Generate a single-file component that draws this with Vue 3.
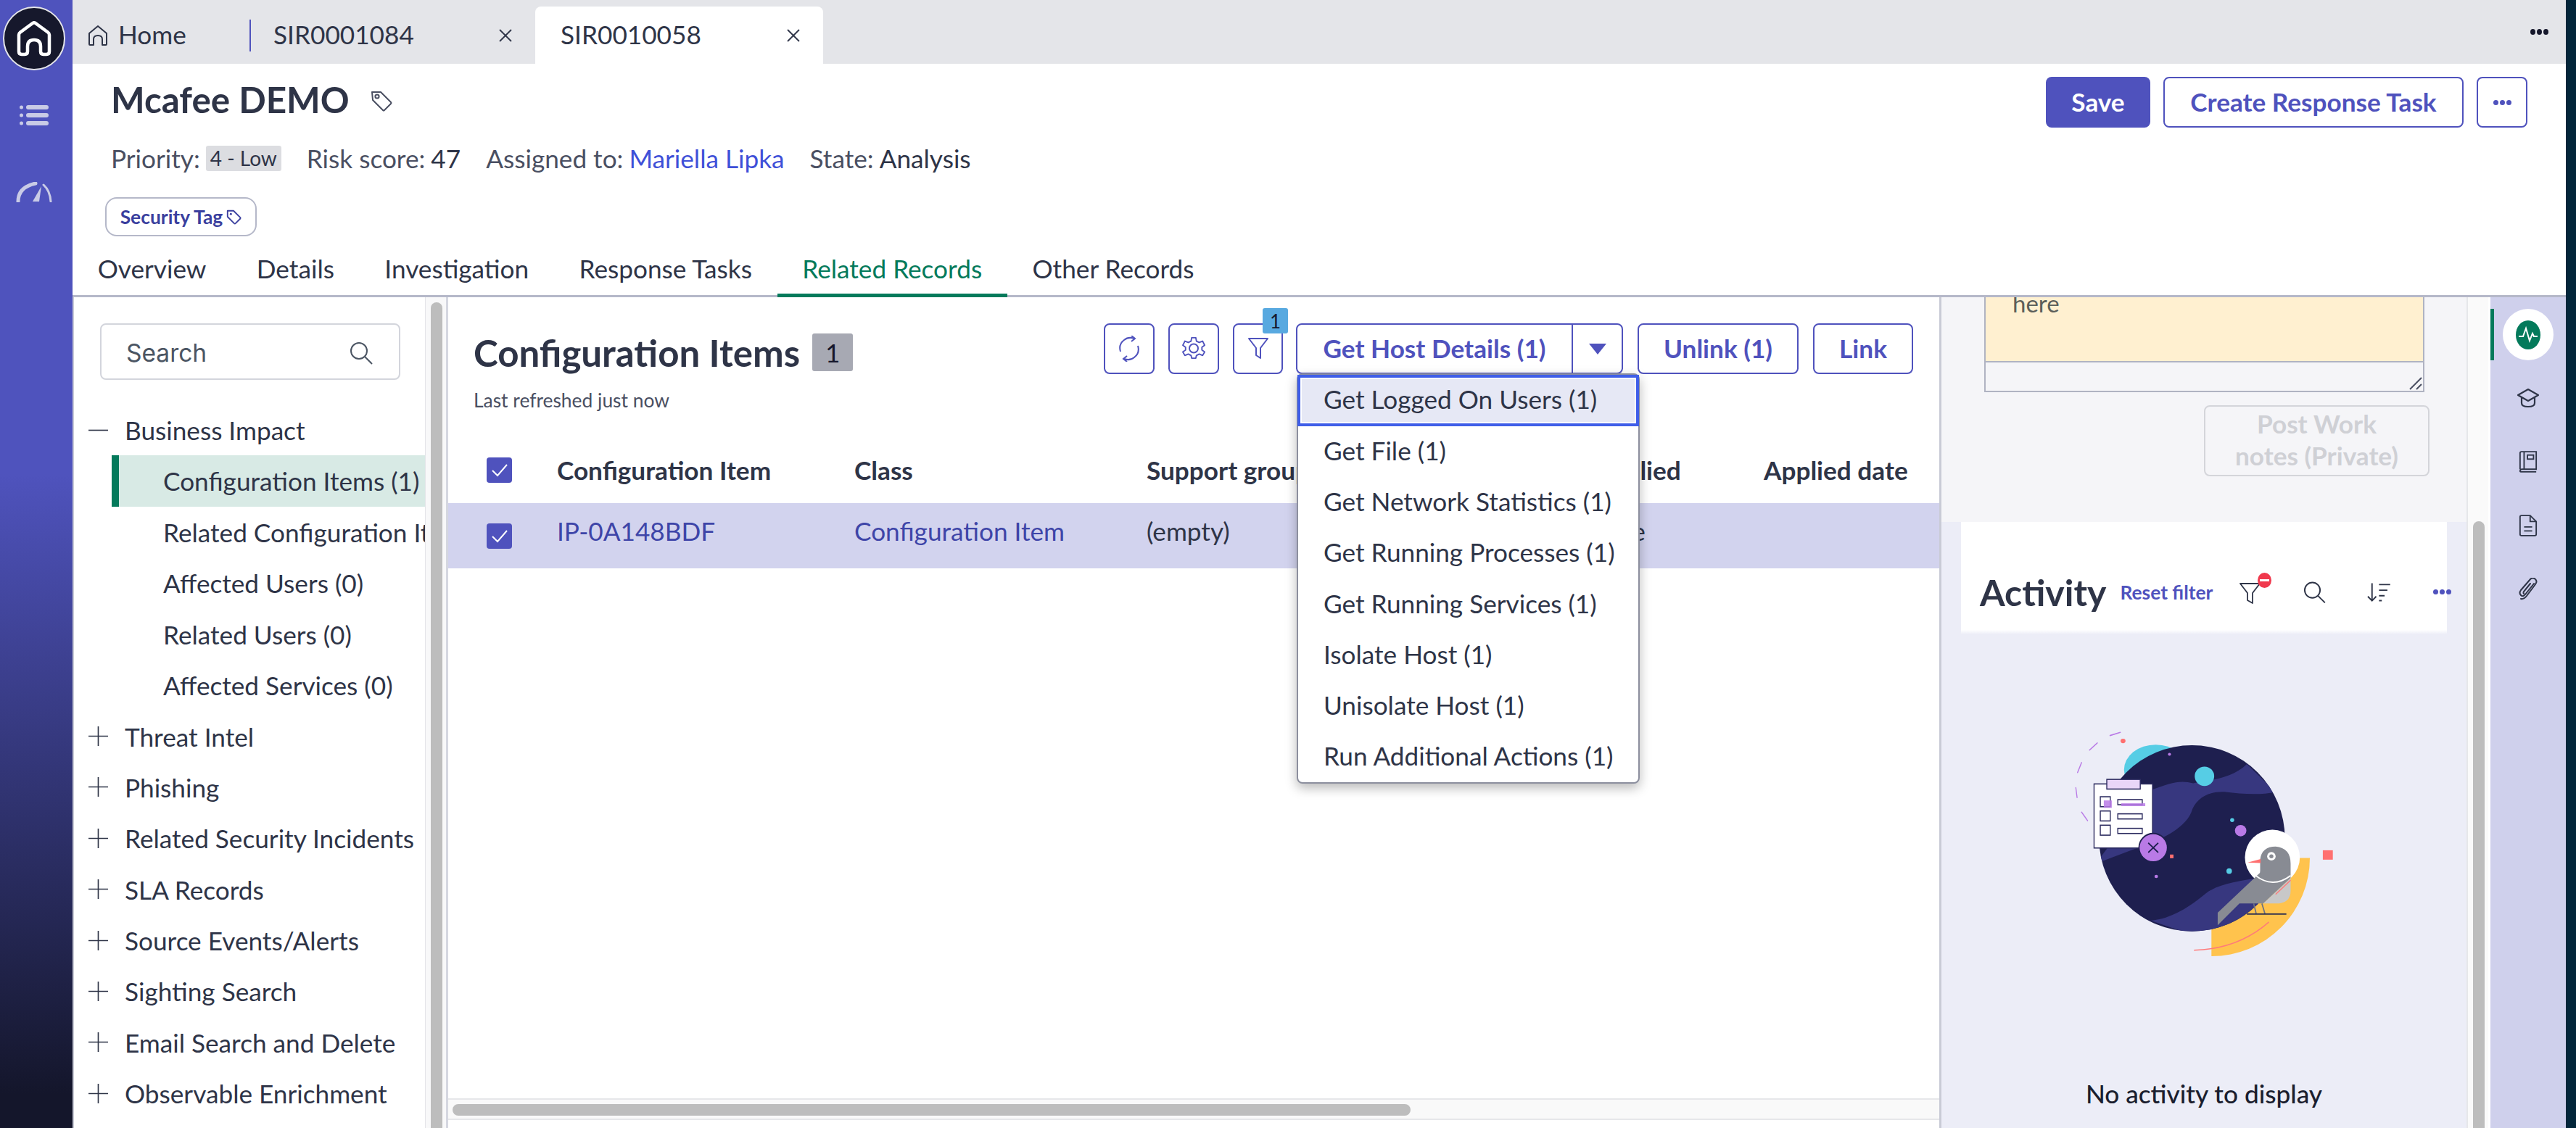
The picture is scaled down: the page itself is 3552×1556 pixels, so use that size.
<template>
  <div class="app">
    <!-- left rail -->
    <aside class="rail">
      <div class="rail-home">
        <svg viewBox="0 0 86 88" width="86" height="88">
          <ellipse cx="43" cy="44" rx="42" ry="43" fill="#16182c" stroke="#e4e5e9" stroke-width="2" />
          <path d="M22 62V39Q22 37 24 35.5L41 23Q43 21.5 45 23L62 35.5Q64 37 64 39V62Q64 66 60 66H56Q52 66 52 62V55Q52 46 43 46Q34 46 34 55V62Q34 66 30 66H26Q22 66 22 62Z" fill="none" stroke="#fff" stroke-width="4.5" stroke-linejoin="round" />
        </svg>
      </div>
      <svg class="rail-icon" viewBox="0 0 40 28" width="40" height="28">
        <g fill="#c9cbe6">
          <circle cx="2.5" cy="3" r="2.5" /><rect x="9" y="0" width="31" height="6" rx="3" />
          <circle cx="2.5" cy="14" r="2.5" /><rect x="9" y="11" width="31" height="6" rx="3" />
          <circle cx="2.5" cy="25" r="2.5" /><rect x="9" y="22" width="31" height="6" rx="3" />
        </g>
      </svg>
      <svg class="rail-gauge" viewBox="0 0 50 28" width="50" height="28">
        <path d="M3 27Q3 7 27 2" fill="none" stroke="#c9cbe6" stroke-width="5" stroke-linecap="round" />
        <path d="M38 4Q47 12 48 27" fill="none" stroke="#c9cbe6" stroke-width="3" stroke-linecap="round" />
        <path d="M23 27L35 6L32 27Z" fill="#c9cbe6" />
      </svg>
    </aside>

    <div class="shell">
      <!-- top tabs -->
      <div class="tabbar">
        <div class="tab tab-home">
          <svg viewBox="0 0 28 30" width="28" height="30">
            <path d="M2 27V12L14 2L26 12V27Q26 28 25 28H20V20Q20 15 14 15Q8 15 8 20V28H3Q2 28 2 27Z" fill="none" stroke="#2e3447" stroke-width="2" stroke-linejoin="round" />
          </svg>
          <span>Home</span>
        </div>
        <div class="tab tab-record">
          <span>SIR0001084</span>
          <svg class="tab-x" viewBox="0 0 18 18" width="18" height="18"><path d="M1 1L17 17M17 1L1 17" stroke="#2e3447" stroke-width="1.8" /></svg>
        </div>
        <div class="tab tab-record tab-active">
          <span>SIR0010058</span>
          <svg class="tab-x" viewBox="0 0 18 18" width="18" height="18"><path d="M1 1L17 17M17 1L1 17" stroke="#2e3447" stroke-width="1.8" /></svg>
        </div>
        <div class="tabbar-more"><i></i><i></i><i></i></div>
      </div>

      <!-- record header -->
      <header class="record">
        <div class="record-top">
          <div class="record-title">
            <h1>Mcafee DEMO</h1>
            <svg viewBox="0 0 32 32" width="32" height="32" class="title-tag">
              <path d="M3 4H15L29 18Q30 19 29 20L20 29Q19 30 18 29L4 15Z" fill="none" stroke="#4a4f62" stroke-width="2" stroke-linejoin="round" />
              <circle cx="10" cy="10" r="2.6" fill="none" stroke="#4a4f62" stroke-width="2" />
            </svg>
          </div>
          <div class="record-actions">
            <button class="btn btn-solid btn-save">Save</button>
            <button class="btn btn-create">Create Response Task</button>
            <button class="btn btn-more"><i></i><i></i><i></i></button>
          </div>
        </div>
        <div class="meta">
          <span class="meta-item">Priority: <b class="pill">4 - Low</b></span>
          <span class="meta-item">Risk score: <em>47</em></span>
          <span class="meta-item">Assigned to: <a>Mariella Lipka</a></span>
          <span class="meta-item">State: <em>Analysis</em></span>
        </div>
        <div class="chip">
          Security Tag
          <svg viewBox="0 0 24 24" width="22" height="22">
            <path d="M3 3H12L22 13Q23 14 22 15L15 22Q14 23 13 22L3 12Z" fill="none" stroke="#3a3f9e" stroke-width="2" stroke-linejoin="round" />
            <circle cx="8" cy="8" r="1.6" fill="#3a3f9e" />
          </svg>
        </div>
        <nav class="record-tabs">
          <span v-for="t in recordTabs" :key="t" class="record-tab" :class="{ active: t === 'Related Records' }">{{ t }}</span>
        </nav>
      </header>

      <div class="body">
        <!-- related list tree -->
        <section class="tree">
          <div class="search">
            <span>Search</span>
            <svg viewBox="0 0 32 32" width="32" height="32">
              <circle cx="13" cy="13" r="11" fill="none" stroke="#4b5563" stroke-width="2" />
              <path d="M21 21L31 31" stroke="#4b5563" stroke-width="2" />
            </svg>
          </div>
          <div class="tree-list">
            <div class="tree-group">
              <svg viewBox="0 0 28 28" width="29" height="29"><path d="M1 14H27" stroke="#2e3447" stroke-width="1.6" /></svg>
              <span>Business Impact</span>
            </div>
            <div v-for="c in impactItems" :key="c" class="tree-child" :class="{ selected: c === 'Configuration Items (1)' }">{{ c }}</div>
            <div v-for="g in groups" :key="g" class="tree-group">
              <svg viewBox="0 0 28 28" width="29" height="29"><path d="M1 14H27M14 1V27" stroke="#2e3447" stroke-width="1.6" /></svg>
              <span>{{ g }}</span>
            </div>
          </div>
        </section>
        <div class="tree-scroll"><div class="thumb"></div></div>

        <!-- configuration items list -->
        <section class="list">
          <div class="list-head">
            <div>
              <div class="list-title">
                <h2>Configuration Items</h2>
                <span class="count">1</span>
              </div>
              <div class="refreshed">Last refreshed just now</div>
            </div>
            <div class="list-tools">
              <button class="btn btn-icon">
                <svg viewBox="0 0 32 36" width="32" height="36">
                  <path d="M4 22Q1 12 9 6Q15 1 23 4M28 14Q31 24 23 30Q17 35 9 32" fill="none" stroke="#4f52bd" stroke-width="2" />
                  <path d="M19 0L24 4L19 8M13 28L8 32L13 36" fill="none" stroke="#4f52bd" stroke-width="2" />
                </svg>
              </button>
              <button class="btn btn-icon">
                <svg viewBox="0 0 32 32" width="32" height="32">
                  <path d="M13 2H19L20 7L24 9L29 7L32 13L28 16L28 20L32 23L29 28L24 26L20 28L19 32H13L12 28L8 26L3 28L0 23L4 20V16L0 13L3 7L8 9L12 7Z" transform="translate(1 -1) scale(.94)" fill="none" stroke="#4f52bd" stroke-width="2" stroke-linejoin="round" />
                  <circle cx="16" cy="15.5" r="6" fill="none" stroke="#4f52bd" stroke-width="2" />
                </svg>
              </button>
              <div class="filter-wrap">
                <button class="btn btn-icon btn-filter">
                  <svg viewBox="0 0 30 32" width="30" height="32">
                    <path d="M2 2H28L18 15V29L12 25V15Z" fill="none" stroke="#4f52bd" stroke-width="2" stroke-linejoin="round" />
                  </svg>
                </button>
                <span class="filter-badge">1</span>
              </div>
              <div class="split">
                <button class="btn split-main">Get Host Details (1)</button>
                <button class="btn split-caret"><i></i></button>
                <ul class="menu">
                  <li v-for="(m, i) in menuItems" :key="m" :class="{ focus: i === 0 }">{{ m }}</li>
                </ul>
              </div>
              <button class="btn btn-unlink">Unlink (1)</button>
              <button class="btn btn-link">Link</button>
            </div>
          </div>

          <div class="table">
            <div class="t-row t-head">
              <div><span class="check"><svg viewBox="0 0 35 35" width="35" height="35"><path d="M8 18L15 25L28 10" fill="none" stroke="#fff" stroke-width="2" /></svg></span></div>
              <div>Configuration Item</div>
              <div>Class</div>
              <div>Support group</div>
              <div>Applied</div>
              <div>Applied date</div>
            </div>
            <div class="t-row t-body">
              <div><span class="check"><svg viewBox="0 0 35 35" width="35" height="35"><path d="M8 18L15 25L28 10" fill="none" stroke="#fff" stroke-width="2" /></svg></span></div>
              <div class="t-cell"><a>IP-0A148BDF</a></div>
              <div class="t-cell"><a>Configuration Item</a></div>
              <div class="t-cell">(empty)</div>
              <div class="t-cell">false</div>
              <div></div>
            </div>
          </div>

          <div class="h-scroll"><div class="h-thumb"></div></div>
        </section>

        <!-- activity side panel -->
        <section class="side">
          <div class="side-scrollarea">
            <div class="worknotes">
              <div class="note-box">
                <div class="note-text">here</div>
                <div class="note-foot">
                  <svg viewBox="0 0 20 20" width="20" height="20"><path d="M2 18L18 2M11 18L18 11" stroke="#4a4f62" stroke-width="2" /></svg>
                </div>
              </div>
              <div class="note-actions">
                <button class="post-btn">Post Work notes (Private)</button>
              </div>
            </div>
            <div class="activity">
              <div class="activity-head">
                <h3>Activity</h3>
                <a class="reset">Reset filter</a>
                <span class="tool tool-filter">
                  <svg viewBox="0 0 30 34" width="30" height="34">
                    <path d="M1 4H28L18 17V31L11 27V17Z" fill="none" stroke="#2e3447" stroke-width="1.8" stroke-linejoin="round" />
                  </svg>
                  <i class="no-badge"></i>
                </span>
                <svg class="tool-search" viewBox="0 0 32 32" width="32" height="32">
                  <circle cx="13" cy="13" r="11" fill="none" stroke="#2e3447" stroke-width="2" />
                  <path d="M21 21L31 31" stroke="#2e3447" stroke-width="2" />
                </svg>
                <svg class="tool-sort" viewBox="0 0 34 28" width="34" height="28">
                  <path d="M7 1V26M1 20L7 26L13 20" fill="none" stroke="#2e3447" stroke-width="2" />
                  <path d="M17 3H33M17 11H29M17 19H25M17 26H21" stroke="#2e3447" stroke-width="2" />
                </svg>
                <span class="dots"><i></i><i></i><i></i></span>
              </div>
              <div class="activity-empty">
                <svg class="astro" viewBox="0 0 1568 1100" width="540" height="432" preserveAspectRatio="none">
                  <defs>
                    <clipPath id="planet-clip"><ellipse cx="765" cy="551" rx="372" ry="327" /></clipPath>
                  </defs>
                  <path d="M843 620H1237A394 345 0 0 1 843 965Z" fill="#ffc34d" />
                  <ellipse cx="620" cy="310" rx="127" ry="88" fill="#56cde5" />
                  <ellipse cx="765" cy="551" rx="372" ry="327" fill="#1e1f4f" />
                  <g clip-path="url(#planet-clip)" fill="#37377f">
                    <path d="M600 382C680 355 720 345 770 358C830 345 920 345 985 290L1100 388C1040 400 960 395 900 388C830 385 780 410 762 460C735 520 620 565 530 590L380 640Z" />
                    <path d="M600 840C680 835 760 790 820 745C870 710 960 700 1020 692L1150 860L800 900Z" />
                  </g>
                  <ellipse cx="815" cy="333" rx="39" ry="34" fill="#56cde5" />
                  <ellipse cx="960" cy="524" rx="23" ry="20" fill="#b97ae6" />
                  <ellipse cx="926" cy="487" rx="8" ry="7" fill="#56cde5" />
                  <ellipse cx="914" cy="666" rx="11" ry="10" fill="#56cde5" />
                  <ellipse cx="675" cy="256" rx="6" ry="5" fill="#b97ae6" />
                  <ellipse cx="622" cy="685" rx="7" ry="6" fill="#b97ae6" />
                  <ellipse cx="489" cy="209" rx="10" ry="8" fill="#ff7070" />
                  <rect x="677" y="608" width="14" height="13" fill="#ff7070" />
                  <rect x="1289" y="593" width="40" height="33" fill="#ff7070" />
                  <g stroke="#b97ae6" stroke-width="4" stroke-linecap="round">
                    <path d="M437 190L478 179M355 241L386 216M307 320L323 285M300 373L305 408M323 459L347 489" />
                  </g>
                  <!-- clipboard -->
                  <rect x="373" y="360" width="234" height="225" fill="#fff" stroke="#2b2a5e" stroke-width="4" />
                  <rect x="424" y="344" width="134" height="34" fill="#e9d6f8" stroke="#2b2a5e" stroke-width="4" />
                  <g fill="none" stroke="#2b2a5e" stroke-width="4">
                    <rect x="398" y="405" width="40" height="35" /><rect x="398" y="455" width="40" height="35" /><rect x="398" y="505" width="40" height="35" />
                    <rect x="468" y="415" width="98" height="18" /><rect x="468" y="465" width="98" height="18" /><rect x="468" y="516" width="98" height="18" />
                  </g>
                  <rect x="412" y="418" width="32" height="26" fill="#b97ae6" opacity=".85" />
                  <rect x="482" y="428" width="96" height="10" fill="#b97ae6" opacity=".85" />
                  <ellipse cx="610" cy="584" rx="57" ry="50" fill="#b97ae6" stroke="#1e1f4f" stroke-width="5" />
                  <path d="M590 567L630 601M630 567L590 601" stroke="#1e1f4f" stroke-width="5" />
                  <!-- bird -->
                  <ellipse cx="1087" cy="618" rx="110" ry="97" fill="#fff" />
                  <path d="M1050 780L1160 690V735Q1160 780 1100 780Z" fill="#c8c8c8" />
                  <path d="M1038 665V625Q1045 580 1100 580Q1160 585 1160 640V690L1050 780H955L868 856V812L1037 672Z" fill="#888b93" />
                  <path d="M1017 680Q1087 730 1160 682" fill="none" stroke="#fff" stroke-width="5" />
                  <path d="M988 636L1040 624V638Z" fill="#ff7070" />
                  <ellipse cx="1083" cy="614" rx="17" ry="15" fill="#fff" />
                  <ellipse cx="1083" cy="614" rx="8" ry="7" fill="#888b93" />
                  <path d="M1012 780L1022 815M1045 780L1057 815" stroke="#6e7280" stroke-width="5" />
                  <path d="M985 817H1143" stroke="#2b2d4f" stroke-width="5" />
                  <path d="M773 944Q950 940 1073 845M1100 748L1160 698" fill="none" stroke="#ff7a7a" stroke-width="4" />
                </svg>
                <p>No activity to display</p>
              </div>
            </div>
          </div>
          <div class="side-scroll"><div class="side-thumb"></div></div>
        </section>

        <!-- context rail -->
        <aside class="context">
          <div class="ctx ctx-active">
            <span class="ctx-disc">
              <svg viewBox="0 0 34 40" width="34" height="40">
                <ellipse cx="17" cy="20" rx="17" ry="20" fill="#047a5b" />
                <path d="M4 22H10L14 11L19 28L23 18L25 22H30" fill="none" stroke="#fff" stroke-width="2" />
              </svg>
            </span>
          </div>
          <div class="ctx">
            <svg viewBox="0 0 32 28" width="32" height="28">
              <path d="M16 2L30 10L16 18L2 10Z" fill="none" stroke="#2e3447" stroke-width="2.2" stroke-linejoin="round" />
              <path d="M7 13V21Q7 26 16 26Q25 26 25 21V13" fill="none" stroke="#2e3447" stroke-width="2.2" />
            </svg>
          </div>
          <div class="ctx">
            <svg viewBox="0 0 28 32" width="26" height="30">
              <path d="M2 27V3Q2 1 4 1H26V27H5Q2 27 2 30Q2 31 5 31H26" fill="none" stroke="#2e3447" stroke-width="2" />
              <path d="M8 1V27" stroke="#2e3447" stroke-width="2" />
              <rect x="13" y="6" width="9" height="6" fill="none" stroke="#2e3447" stroke-width="2" />
            </svg>
          </div>
          <div class="ctx">
            <svg viewBox="0 0 28 32" width="26" height="32">
              <path d="M2 3Q2 1 4 1H17L26 10V29Q26 31 24 31H4Q2 31 2 29Z" fill="none" stroke="#2e3447" stroke-width="2" stroke-linejoin="round" />
              <path d="M17 1V10H26M8 18H20M8 24H20" fill="none" stroke="#2e3447" stroke-width="2" />
            </svg>
          </div>
          <div class="ctx">
            <svg viewBox="0 0 28 32" width="28" height="32">
              <path d="M22 9L10 24Q7 28 4 25Q1 22 4 18L17 3Q20 0 24 3Q27 6 24 10L12 26Q8 31 4 30M17 9L8 20Q7 22 8 23" fill="none" stroke="#2e3447" stroke-width="2" stroke-linecap="round" transform="translate(0 -1)" />
            </svg>
          </div>
        </aside>
      </div>
    </div>
    <div class="edge"></div>
  </div>
</template>

<script setup>
const recordTabs = ['Overview', 'Details', 'Investigation', 'Response Tasks', 'Related Records', 'Other Records']

const impactItems = [
  'Configuration Items (1)',
  'Related Configuration Items (0)',
  'Affected Users (0)',
  'Related Users (0)',
  'Affected Services (0)'
]

const groups = [
  'Threat Intel',
  'Phishing',
  'Related Security Incidents',
  'SLA Records',
  'Source Events/Alerts',
  'Sighting Search',
  'Email Search and Delete',
  'Observable Enrichment'
]

const menuItems = [
  'Get Logged On Users (1)',
  'Get File (1)',
  'Get Network Statistics (1)',
  'Get Running Processes (1)',
  'Get Running Services (1)',
  'Isolate Host (1)',
  'Unisolate Host (1)',
  'Run Additional Actions (1)'
]
</script>

<style>
html, body { margin: 0; background: #fff; }
</style>

<style scoped>
.app {
  display: flex;
  width: 3552px;
  height: 1556px;
  overflow: hidden;
  font-family: Lato, "Noto Sans", sans-serif;
  font-size: 35.2px;
  color: #2e3447;
}

/* left rail */
.rail {
  width: 100px;
  flex: none;
  display: flex;
  flex-direction: column;
  align-items: center;
  background: linear-gradient(to bottom, #4f53bd 0, #4f53bd 42%, #14162b 97%);
}
.rail-home { margin-top: 9px; margin-left: -6px; height: 88px; }
.rail-icon { margin-top: 48px; margin-left: -6px; }
.rail-gauge { margin-top: 78px; margin-left: -6px; }

.shell { flex: 1; display: flex; flex-direction: column; min-width: 0; }

/* top tabs */
.tabbar {
  display: flex;
  align-items: flex-end;
  height: 88px;
  flex: none;
  background: #e4e5e9;
}
.tab { display: flex; align-items: center; height: 79px; font-size: 35.2px; }
.tab span { padding-bottom: 4px; }
.tab-home { width: 244px; padding-left: 21px; gap: 14px; box-sizing: border-box; }
.tab-record { width: 394px; padding-left: 33px; padding-right: 32px; box-sizing: border-box; justify-content: space-between; position: relative; }
.tab-home + .tab-record::before {
  content: "";
  position: absolute;
  left: 0;
  top: 18px;
  height: 44px;
  width: 2px;
  background: #4f53bd;
}
.tab-active { background: #fff; border-radius: 8px 8px 0 0; width: 397px; padding-left: 35px; }
.tabbar-more { margin-left: auto; margin-right: 24px; align-self: center; display: flex; gap: 2px; }
.tabbar-more i { width: 7px; height: 8px; border-radius: 50%; background: #16182c; }

/* record header */
.record {
  height: 322px;
  flex: none;
  box-sizing: border-box;
  padding: 18px 0 0 0;
  background: #fff;
  display: flex;
  flex-direction: column;
}
.record-top { display: flex; justify-content: space-between; align-items: flex-start; padding: 0 53px; }
.record-title { display: flex; align-items: center; gap: 28px; padding-top: 2px; padding-bottom: 4px; }
.record-title h1 { margin: 0; font-size: 49.4px; font-weight: 700; line-height: 58px; color: #2e3447; }
.title-tag { margin-top: 4px; }
.record-actions { display: flex; gap: 18px; }
.btn {
  font-family: inherit;
  font-size: 35.2px;
  font-weight: 700;
  color: #4f52bd;
  background: #fff;
  border: 2.5px solid #4f52bd;
  border-radius: 8px;
  box-sizing: border-box;
  padding: 0 0 3px;
  display: inline-flex;
  align-items: center;
  justify-content: center;
}
.btn-solid { background: #4f52bd; color: #fff; }
.btn-save { width: 144px; height: 70px; }
.btn-create { width: 414px; height: 70px; }
.btn-more { width: 70px; height: 70px; gap: 2px; padding: 0; }
.btn-more i, .dots i { width: 7px; height: 7px; border-radius: 50%; background: #4f52bd; }

.meta { display: flex; gap: 35px; padding: 0 53px; margin-top: 22px; height: 40px; align-items: center; }
.meta-item { color: #4a4f62; white-space: nowrap; display: flex; align-items: center; gap: 8px; }
.meta-item em { font-style: normal; color: #2e3447; }
.meta-item a { color: #3f50d8; }
.pill { background: #dcdde1; color: #2e3447; font-size: 28px; font-weight: 400; border-radius: 3px; padding: 1px 6px; line-height: 33px; }
.chip {
  align-self: flex-start;
  margin: 34px 0 0 45px;
  height: 54px;
  width: 209px;
  box-sizing: border-box;
  border: 2px solid #b5b8c9;
  border-radius: 16px;
  display: flex;
  align-items: center;
  justify-content: center;
  gap: 4px;
  font-size: 26.4px;
  font-weight: 700;
  color: #3a3f9e;
  white-space: nowrap;
}
.record-tabs {
  display: flex;
  margin-top: auto;
  height: 80px;
  align-items: stretch;
  border-bottom: 3px solid #b5b8c9;
  box-sizing: border-box;
}
.record-tab { padding: 4px 34.7px 0; display: flex; align-items: center; color: #2e3447; margin-bottom: -3px; border-bottom: 5px solid transparent; box-sizing: border-box; }
.record-tab.active { color: #047a5b; border-bottom-color: #047a5b; }

.body { flex: 1; display: flex; min-height: 0; }

/* tree */
.tree { width: 486px; flex: none; box-sizing: border-box; border-left: 2px solid #c9cbd6; overflow: hidden; }
.search {
  margin: 36px 34px 0 36px;
  height: 78px;
  box-sizing: border-box;
  border: 2px solid #d3d5dc;
  border-radius: 8px;
  display: flex;
  align-items: center;
  justify-content: space-between;
  padding: 3px 36px 0 34px;
  font-family: Inter, sans-serif;
  font-size: 33.5px;
  color: #4b5563;
}
.tree-list { margin-top: 34px; }
.tree-group { display: flex; align-items: center; height: 70.4px; padding-left: 19px; gap: 22px; white-space: nowrap; }
.tree-child { height: 70.4px; line-height: 70px; padding-left: 123px; white-space: nowrap; overflow: hidden; }
.tree-child.selected { margin-left: 52px; padding-left: 61px; background: #d8eae5; border-left: 10px solid #047a5b; }
.tree-scroll { flex: none; background: #f8f8f9; border-left: 1px solid #e4e5e9; box-sizing: border-box; padding: 7px 6px 0 7px; border-right: 3px solid #d5d7e0; width: 32px; }
.thumb { height: 100%; border-radius: 8px 8px 0 0; background: #bdbdbd; width: 16px; }

/* list */
.list { width: 2056px; flex: none; display: flex; flex-direction: column; background: #fff; position: relative; }
.list-head { display: flex; justify-content: space-between; padding: 36px 36px 0 35px; }
.list-title { display: flex; align-items: center; gap: 17px; height: 70px; padding-top: 10px; box-sizing: border-box; }
.list-title h2 { margin: 0; font-size: 51px; font-weight: 700; white-space: nowrap; }
.count { width: 56px; height: 52px; background: #a7a9b3; display: flex; align-items: center; justify-content: center; color: #16182c; border-radius: 3px; }
.refreshed { font-size: 26.4px; color: #4a4f62; margin-top: 20px; }
.list-tools { display: flex; gap: 19px; height: 70px; }
.btn-icon { width: 70px; height: 70px; padding: 0; }
.filter-wrap { position: relative; }
.btn-filter { width: 69px; }
.filter-badge {
  position: absolute;
  top: -21px;
  right: -7px;
  width: 35px;
  height: 35px;
  background: #58a9e0;
  border-radius: 3px;
  font-size: 26px;
  color: #16182c;
  display: flex;
  align-items: center;
  justify-content: center;
}
.split { display: flex; position: relative; margin-left: -1px; }
.split-main { width: 381px; height: 70px; border-radius: 8px 0 0 8px; border-right-width: 1px; }
.split-caret { width: 70px; height: 70px; border-radius: 0 8px 8px 0; border-left-width: 1px; padding: 0; }
.split-caret i { border: 12.5px solid transparent; border-top: 15px solid #4f52bd; border-bottom: 0; }
.menu {
  position: absolute;
  top: 69px;
  left: 1px;
  width: 473px;
  margin: 0;
  padding: 0;
  list-style: none;
  background: #fff;
  border: 2px solid #8c8f9e;
  border-radius: 8px;
  box-sizing: border-box;
  box-shadow: 0 6px 16px rgba(0, 0, 0, .28);
  z-index: 5;
}
.menu li { height: 70.2px; line-height: 66px; padding-left: 35px; box-sizing: border-box; white-space: nowrap; }
.menu li.focus { height: 71px; background: #e6e8f5; box-shadow: inset 0 0 0 4px #3f5ee8, inset 0 0 0 6px #fff; margin: 0 -1px; padding-left: 36px; }
.btn-unlink { width: 222px; height: 70px; margin-left: 1px; }
.btn-link { width: 138px; height: 70px; margin-left: 1px; }

.table { margin-top: 34px; }
.t-row { display: grid; grid-template-columns: 150px 410px 403px 616px 235px 242px; align-items: center; white-space: nowrap; }
.t-head { height: 92px; font-weight: 700; }
.t-body { height: 90px; background: #d2d3ee; }
.t-body a { color: #3e45a8; }
.t-cell { padding-bottom: 14px; }
.check { display: block; width: 35px; height: 35px; background: #4f52bd; border-radius: 4px; margin-left: 53px; }
.check svg { display: block; }

.h-scroll { margin-top: auto; margin-bottom: 11px; height: 30px; border-top: 2px solid #e6e7ea; border-bottom: 2px solid #e6e7ea; background: #f9f9f9; box-sizing: border-box; padding: 6px 6px 0; }
.h-thumb { width: 1321px; height: 16px; border-radius: 8px; background: #bdbdbd; }

/* side panel */
.side { width: 757px; flex: none; display: flex; border-left: 3px solid #c9cbd6; }
.side-scrollarea { width: 724px; flex: none; display: flex; flex-direction: column; background: #f5f5f8; overflow: hidden; }
.worknotes { height: 310px; flex: none; padding: 0 59px; box-sizing: border-box; }
.note-box { border: 2px solid #b0b3c2; border-top: 0; background: #f5f5f8; box-sizing: border-box; width: 607px; }
.note-text { height: 90px; background: #fff0d0; border-bottom: 2px solid #b0b3c2; padding-left: 37px; font-size: 33px; color: #5c5f5a; line-height: 16px; box-sizing: border-box; }
.note-foot { height: 39px; display: flex; justify-content: flex-end; align-items: flex-end; }
.note-actions { display: flex; justify-content: flex-end; margin-top: 18px; margin-right: -8px; }
.post-btn {
  width: 311px;
  height: 98px;
  font-family: inherit;
  font-size: 35.2px;
  font-weight: 700;
  color: #cfd0d5;
  background: transparent;
  border: 2px solid #d4d5da;
  border-radius: 8px;
  line-height: 44px;
  padding: 0 30px 4px;
}
.activity { flex: 1; background: #ecedf7; display: flex; flex-direction: column; min-height: 0; }
.activity-head {
  height: 155px;
  margin: 0 27px;
  flex: none;
  background: linear-gradient(to bottom, #fff 96%, #ecedf7 100%);
  display: flex;
  align-items: center;
  padding: 38px 0 0 26px;
  box-sizing: border-box;
}
.activity-head h3 { margin: 0; font-size: 50px; font-weight: 700; line-height: 60px; }
.reset { font-size: 26.4px; font-weight: 700; color: #4f52bd; margin-left: 19px; white-space: nowrap; }
.tool { position: relative; display: block; width: 30px; height: 34px; margin-left: 37px; }
.no-badge { position: absolute; top: -10px; right: -14px; width: 19px; height: 21px; border-radius: 50%; background: #f0394d; }
.no-badge::after { content: ""; position: absolute; left: 3px; right: 3px; top: 9px; height: 3px; background: #fff; }
.tool-search { margin-left: 58px; }
.tool-sort { margin-left: 57px; }
.dots { display: flex; gap: 2px; margin-left: 58px; margin-right: -6px; }
.activity-empty { flex: 1; display: flex; flex-direction: column; min-height: 0; }
.astro { display: block; margin-left: 82px; margin-top: 65px; flex: none; }
.activity-empty p { margin: 115px 0 0; width: 724px; text-align: center; font-size: 35.2px; line-height: 42px; font-weight: 500; color: #1b1e2e; }
.side-scroll { width: 30px; flex: none; background: #fafafa; border-left: 2px solid #e6e7ea; box-sizing: border-box; padding: 309px 5px 0 7px; }
.side-thumb { height: 100%; background: #bdbdbd; border-radius: 8px 8px 0 0; }

/* context rail */
.context { flex: 1; background: #cfd0ec; display: flex; flex-direction: column; align-items: center; padding-top: 16px; }
.ctx { width: 100%; display: flex; align-items: center; justify-content: center; height: 88px; box-sizing: border-box; }
.ctx-active { height: 71px; border-left: 5px solid #047a5b; padding-left: 12px; justify-content: flex-start; margin-bottom: 8px; }
.ctx-disc { width: 70px; height: 71px; background: #fff; border-radius: 50%; display: flex; align-items: center; justify-content: center; }

.edge { width: 14px; flex: none; background: #03263a; }
</style>
